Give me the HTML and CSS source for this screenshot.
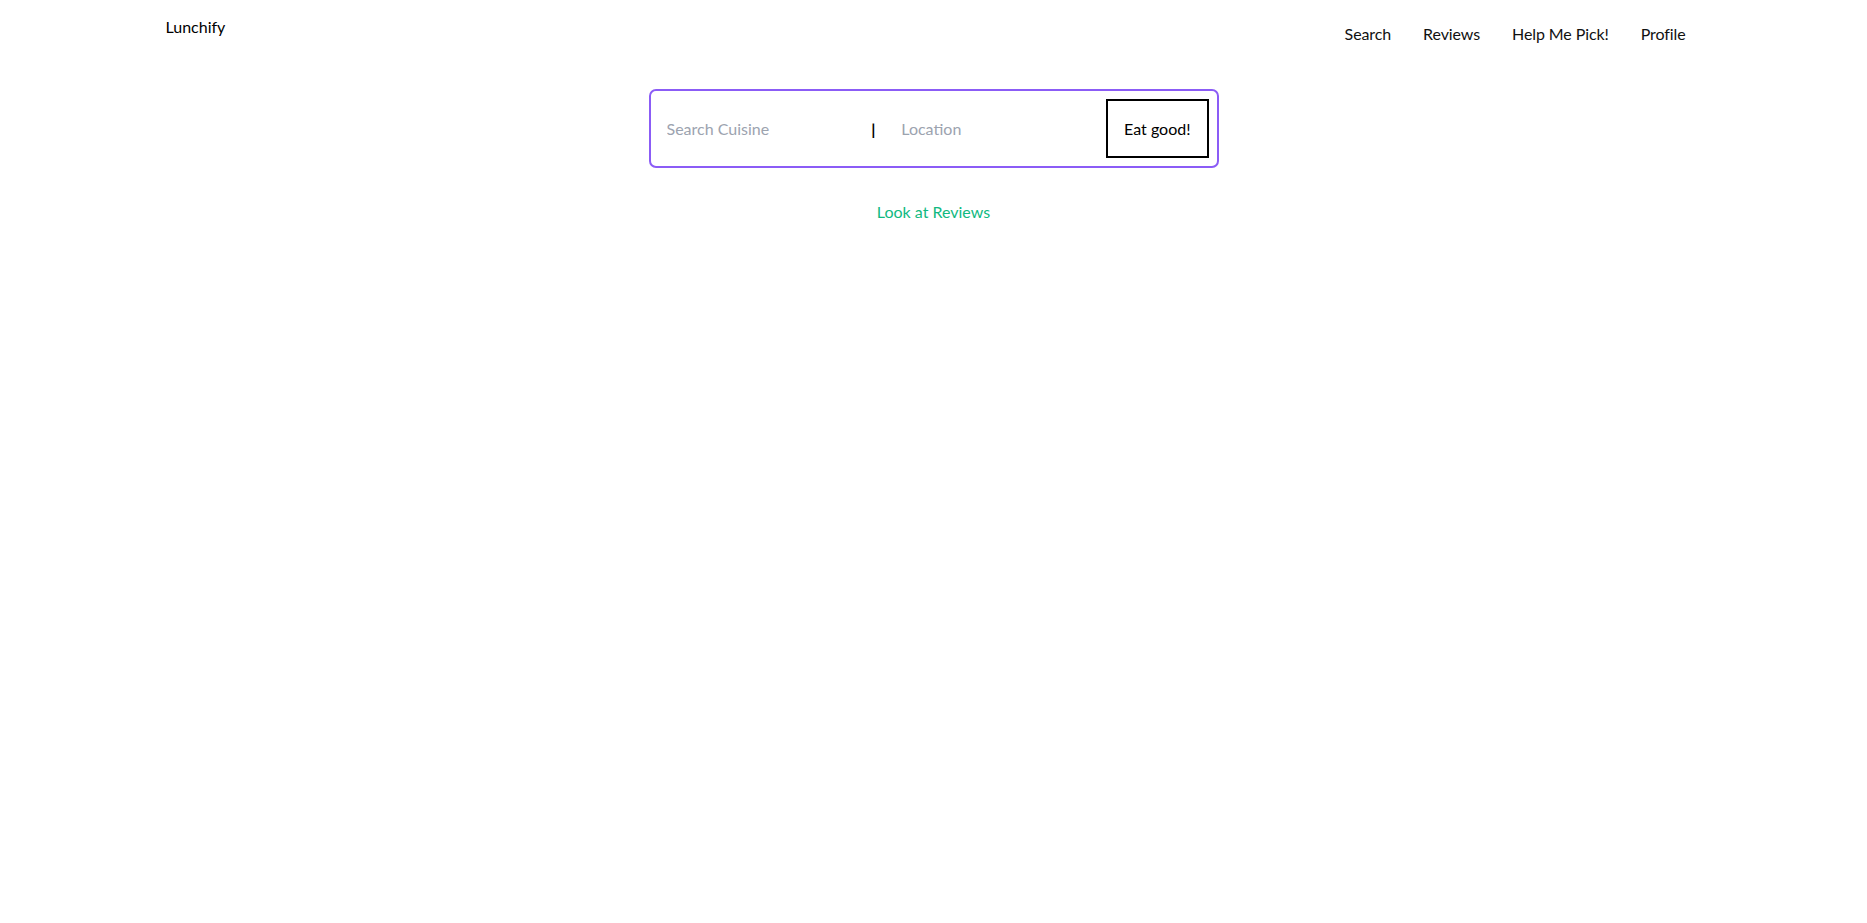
FILE: index.html
```html
<!DOCTYPE html>
<html lang="en">
<head>
<meta charset="utf-8">
<title>Lunchify</title>
<link rel="stylesheet" href="styles.css">
</head>
<body>
<header class="header">
  <div class="container header-inner">
    <div class="logo">Lunchify</div>
    <nav class="nav">
      <a class="nav-link" href="#">Search</a>
      <a class="nav-link" href="#">Reviews</a>
      <a class="nav-link" href="#">Help Me Pick!</a>
      <a class="nav-link" href="#">Profile</a>
    </nav>
  </div>
</header>
<main class="main">
  <form class="search-box">
    <input class="search-input" type="text" placeholder="Search Cuisine">
    <span class="divider">|</span>
    <input class="search-input" type="text" placeholder="Location">
    <button class="search-button" type="button">Eat good!</button>
  </form>
  <a class="reviews-link" href="#">Look at Reviews</a>
</main>
</body>
</html>
```

FILE: styles.css
```css
* { box-sizing: border-box; }

html, body {
  margin: 0;
  padding: 0;
  background: #ffffff;
  color: #111111;
  font-family: "Lato", "Noto Sans", sans-serif;
  font-size: 16px;
  line-height: 24px;
}

.container {
  max-width: 1536px;
  margin: 0 auto;
}

.header-inner {
  display: flex;
  justify-content: space-between;
  align-items: flex-start;
  padding-top: 15px;
}

.logo {
  color: #000000;
}

.nav {
  display: flex;
}

.nav-link {
  display: block;
  padding: 7px 16px;
  color: #111111;
  text-decoration: none;
  letter-spacing: -0.1px;
}

.main {
  display: flex;
  flex-direction: column;
  align-items: center;
  padding-top: 36px;
}

.search-box {
  display: flex;
  align-items: center;
  gap: 8px;
  width: 570px;
  height: 79px;
  padding: 8px;
  border: 2px solid #8b5cf6;
  border-radius: 7px;
  margin: 0;
}

.search-input {
  flex: 1;
  min-width: 0;
  border: none;
  outline: none;
  padding: 8px;
  font-family: inherit;
  font-size: 16px;
  line-height: 24px;
  color: #111111;
  background: transparent;
}

.search-input::placeholder {
  color: #9ca3af;
}

.divider {
  width: 14px;
  padding-left: 0;
  font-weight: 700;
  color: #000000;
}

.search-button {
  height: 59px;
  padding: 0 16px;
  border: 2px solid #000000;
  background: #ffffff;
  color: #000000;
  font-family: inherit;
  font-size: 16px;
  cursor: pointer;
}

.reviews-link {
  margin-top: 32px;
  color: #10b981;
  text-decoration: none;
}
```
